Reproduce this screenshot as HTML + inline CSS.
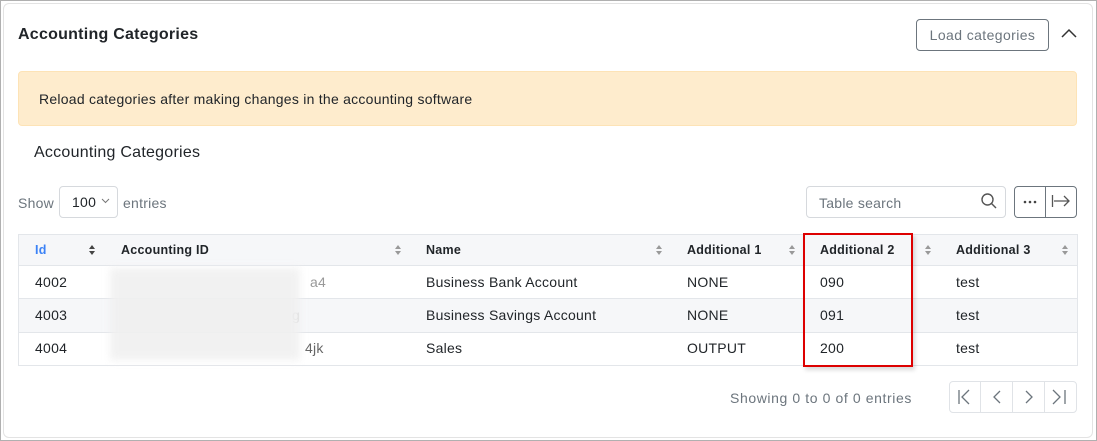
<!DOCTYPE html><html><head><style>
body{margin:0;width:1097px;height:441px;overflow:hidden;background:#fff;font-family:"Liberation Sans",sans-serif;position:relative;letter-spacing:0.25px}
.frame{position:absolute;left:0;top:0;width:1095px;height:439px;border:1px solid #b0b0b0}
.card{position:absolute;left:3px;top:3px;width:1088px;height:433px;border:1px solid #e3e3e3;border-radius:6px}
.a{position:absolute;white-space:nowrap}
.t{font-size:14px;color:#212529}
.sort{position:absolute;width:0;height:0;border-left:3.5px solid transparent;border-right:3.5px solid transparent}
</style></head><body>
<div class="frame"></div><div class="card"></div>
<div class="a" style="left:18px;top:26px;font-size:16px;font-weight:bold;color:#212529">Accounting Categories</div>
<div class="a" style="left:916px;top:19px;width:131px;height:30px;border:1px solid #6c757d;border-radius:4px;font-size:14px;color:#6c757d;text-align:center;line-height:30px;letter-spacing:0.4px">Load categories</div>
<svg class="a" style="left:1061px;top:28px" width="16" height="12"><path d="M1 9 L8 2 L15 9" fill="none" stroke="#333" stroke-width="1.5"/></svg>
<div class="a" style="left:18px;top:71px;width:1057px;height:53px;background:#feeccd;border:1px solid #fde3b6;border-radius:4px"></div>
<div class="a t" style="left:39px;top:91px">Reload categories after making changes in the accounting software</div>
<div class="a" style="left:34px;top:144px;font-size:16px;color:#212529">Accounting Categories</div>
<div class="a" style="left:18px;top:195px;font-size:14px;color:#6c757d">Show</div>
<div class="a" style="left:59px;top:186px;width:57px;height:30px;border:1px solid #d6d9dd;border-radius:4px"></div>
<div class="a t" style="left:72px;top:194px">100</div>
<svg class="a" style="left:101px;top:198px" width="9" height="6"><path d="M1 1 L4.5 4.5 L8 1" fill="none" stroke="#777"/></svg>
<div class="a" style="left:123px;top:195px;font-size:14px;color:#6c757d">entries</div>
<div class="a" style="left:806px;top:186px;width:198px;height:30px;border:1px solid #d6d9dd;border-radius:4px"></div>
<div class="a" style="left:819px;top:195px;font-size:14px;color:#6c757d">Table search</div>
<svg class="a" style="left:980px;top:192px" width="18" height="18"><circle cx="7.5" cy="7.5" r="5.5" fill="none" stroke="#555" stroke-width="1.4"/><path d="M11.5 11.5 L16 16" stroke="#555" stroke-width="1.4"/></svg>
<div class="a" style="left:1014px;top:186px;width:61px;height:30px;border:1px solid #6c757d;border-radius:4px"></div>
<div class="a" style="left:1045px;top:187px;width:1px;height:30px;background:#6c757d"></div>
<svg class="a" style="left:1022px;top:199px" width="16" height="6"><circle cx="3" cy="3" r="1.3" fill="#444"/><circle cx="8" cy="3" r="1.3" fill="#444"/><circle cx="13" cy="3" r="1.3" fill="#444"/></svg>
<svg class="a" style="left:1051px;top:193px" width="20" height="16"><path d="M1.5 2V14M3 8H18M13 3L18 8L13 13" fill="none" stroke="#555" stroke-width="1.3"/></svg>
<div class="a" style="left:18px;top:234px;width:1058px;height:130px;border:1px solid #e3e6ea"></div>
<div class="a" style="left:19px;top:235px;width:1058px;height:30px;background:#f6f7f9;border-bottom:1px solid #e3e6ea"></div>
<div class="a" style="left:19px;top:298px;width:1058px;height:33px;background:#f6f7f9;border-top:1px solid #e3e6ea;border-bottom:1px solid #e3e6ea"></div>
<div style="font-size:12.5px;font-weight:bold;color:#212529">
<div class="a" style="left:35px;top:243px;color:#3b82f6">Id</div>
<div class="a" style="left:121px;top:243px">Accounting ID</div>
<div class="a" style="left:426px;top:243px">Name</div>
<div class="a" style="left:687px;top:243px">Additional 1</div>
<div class="a" style="left:820px;top:243px">Additional 2</div>
<div class="a" style="left:956px;top:243px">Additional 3</div>
</div>
<div class="sort" style="left:89px;top:245px;border-bottom:4px solid #444"></div><div class="sort" style="left:89px;top:251px;border-top:4px solid #444"></div>
<div class="sort" style="left:395px;top:245px;border-bottom:4px solid #999"></div><div class="sort" style="left:395px;top:251px;border-top:4px solid #999"></div>
<div class="sort" style="left:656px;top:245px;border-bottom:4px solid #999"></div><div class="sort" style="left:656px;top:251px;border-top:4px solid #999"></div>
<div class="sort" style="left:789px;top:245px;border-bottom:4px solid #999"></div><div class="sort" style="left:789px;top:251px;border-top:4px solid #999"></div>
<div class="sort" style="left:925px;top:245px;border-bottom:4px solid #999"></div><div class="sort" style="left:925px;top:251px;border-top:4px solid #999"></div>
<div class="sort" style="left:1062px;top:245px;border-bottom:4px solid #999"></div><div class="sort" style="left:1062px;top:251px;border-top:4px solid #999"></div>
<div class="t">
<div class="a" style="left:35px;top:274px">4002</div><div class="a" style="left:310px;top:274px;color:#999">a4</div><div class="a" style="left:426px;top:274px">Business Bank Account</div><div class="a" style="left:687px;top:274px">NONE</div><div class="a" style="left:820px;top:274px">090</div><div class="a" style="left:956px;top:274px">test</div>
<div class="a" style="left:35px;top:307px">4003</div><div class="a" style="left:292px;top:307px;color:#ccc">g</div><div class="a" style="left:426px;top:307px">Business Savings Account</div><div class="a" style="left:687px;top:307px">NONE</div><div class="a" style="left:820px;top:307px">091</div><div class="a" style="left:956px;top:307px">test</div>
<div class="a" style="left:35px;top:340px">4004</div><div class="a" style="left:305px;top:340px;color:#666">4jk</div><div class="a" style="left:426px;top:340px">Sales</div><div class="a" style="left:687px;top:340px">OUTPUT</div><div class="a" style="left:820px;top:340px">200</div><div class="a" style="left:956px;top:340px">test</div>
</div>
<div class="a" style="left:110px;top:268px;width:190px;height:92px;background:#f0f0f0;filter:blur(4px);opacity:.9"></div>
<div class="a" style="left:803px;top:233px;width:106px;height:130px;border:2px solid #d00;box-shadow:2px 3px 4px rgba(0,0,0,.15)"></div>
<div class="a" style="left:730px;top:390px;font-size:14px;color:#6c757d;letter-spacing:0.6px">Showing 0 to 0 of 0 entries</div>
<div class="a" style="left:949px;top:381px;width:126px;height:30px;border:1px solid #e0e3e7;border-radius:4px"></div>
<div class="a" style="left:980px;top:382px;width:1px;height:30px;background:#e0e3e7"></div>
<div class="a" style="left:1012px;top:382px;width:1px;height:30px;background:#e0e3e7"></div>
<div class="a" style="left:1044px;top:382px;width:1px;height:30px;background:#e0e3e7"></div>
<svg class="a" style="left:949px;top:381px" width="128" height="32" fill="none" stroke="#6c757d" stroke-width="1.3"><path d="M10 9V23M20 9L13 16L20 23"/><path d="M51 10L45 16L51 22"/><path d="M77 10L83 16L77 22"/><path d="M104 9L111 16L104 23M116 9V23"/></svg>
</body></html>
